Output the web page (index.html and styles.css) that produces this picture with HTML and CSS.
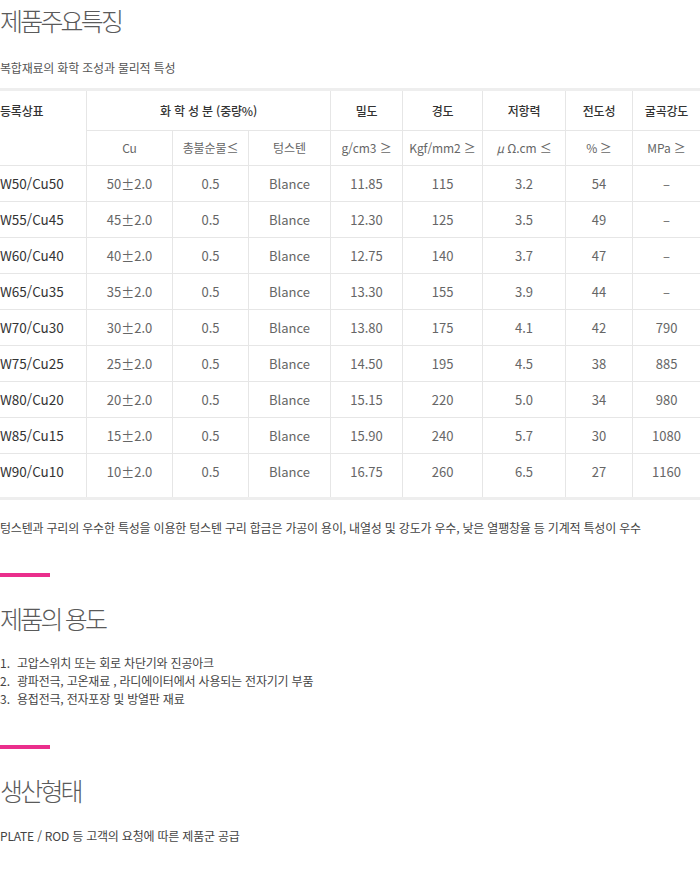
FILE: index.html
```html
<!DOCTYPE html>
<html lang="ko">
<head>
<meta charset="utf-8">
<title>제품주요특징</title>
<link rel="stylesheet" href="styles.css">
</head>
<body>
<div class="page">
  <h2 class="title">제품주요특징</h2>
  <p class="sub">복합재료의 화학 조성과 물리적 특성</p>

  <table class="spec">
    <colgroup>
      <col class="c1"><col class="c2"><col class="c3"><col class="c4"><col class="c5"><col class="c6"><col class="c7"><col class="c8"><col class="c9">
    </colgroup>
    <thead>
      <tr class="h1">
        <th rowspan="2" class="first top">등록상표</th>
        <th colspan="3">화 학 성 분 (중량%)</th>
        <th>밀도</th>
        <th>경도</th>
        <th>저항력</th>
        <th>전도성</th>
        <th>굴곡강도</th>
      </tr>
      <tr class="h2">
        <th>Cu</th>
        <th>총불순물≤</th>
        <th>텅스텐</th>
        <th>g/cm3 ≥</th>
        <th>Kgf/mm2 ≥</th>
        <th><i>μ</i> Ω.cm ≤</th>
        <th>% ≥</th>
        <th>MPa ≥</th>
      </tr>
    </thead>
    <tbody>
      <tr><td class="first">W50/Cu50</td><td>50±2.0</td><td>0.5</td><td>Blance</td><td>11.85</td><td>115</td><td>3.2</td><td>54</td><td>–</td></tr>
      <tr><td class="first">W55/Cu45</td><td>45±2.0</td><td>0.5</td><td>Blance</td><td>12.30</td><td>125</td><td>3.5</td><td>49</td><td>–</td></tr>
      <tr><td class="first">W60/Cu40</td><td>40±2.0</td><td>0.5</td><td>Blance</td><td>12.75</td><td>140</td><td>3.7</td><td>47</td><td>–</td></tr>
      <tr><td class="first">W65/Cu35</td><td>35±2.0</td><td>0.5</td><td>Blance</td><td>13.30</td><td>155</td><td>3.9</td><td>44</td><td>–</td></tr>
      <tr><td class="first">W70/Cu30</td><td>30±2.0</td><td>0.5</td><td>Blance</td><td>13.80</td><td>175</td><td>4.1</td><td>42</td><td>790</td></tr>
      <tr><td class="first">W75/Cu25</td><td>25±2.0</td><td>0.5</td><td>Blance</td><td>14.50</td><td>195</td><td>4.5</td><td>38</td><td>885</td></tr>
      <tr><td class="first">W80/Cu20</td><td>20±2.0</td><td>0.5</td><td>Blance</td><td>15.15</td><td>220</td><td>5.0</td><td>34</td><td>980</td></tr>
      <tr><td class="first">W85/Cu15</td><td>15±2.0</td><td>0.5</td><td>Blance</td><td>15.90</td><td>240</td><td>5.7</td><td>30</td><td>1080</td></tr>
      <tr class="last"><td class="first">W90/Cu10</td><td>10±2.0</td><td>0.5</td><td>Blance</td><td>16.75</td><td>260</td><td>6.5</td><td>27</td><td>1160</td></tr>
    </tbody>
  </table>

  <p class="desc">텅스텐과 구리의 우수한 특성을 이용한 텅스텐 구리 합금은 가공이 용이, 내열성 및 강도가 우수, 낮은 열팽창율 등 기계적 특성이 우수</p>

  <div class="bar"></div>
  <h2 class="title t2">제품의 용도</h2>
  <ol class="uses">
    <li><span class="num">1.</span>고압스위치 또는 회로 차단기와 진공아크</li>
    <li><span class="num">2.</span>광파전극, 고온재료 , 라디에이터에서 사용되는 전자기기 부품</li>
    <li><span class="num">3.</span>용접전극, 전자포장 및 방열판 재료</li>
  </ol>

  <div class="bar bar2"></div>
  <h2 class="title t3">생산형태</h2>
  <p class="desc last-p">PLATE / ROD 등 고객의 요청에 따른 제품군 공급</p>
</div>
</body>
</html>
```

FILE: styles.css
```css
html, body {
  margin: 0;
  padding: 0;
  background: #fff;
}

body {
  font-family: "Noto Sans CJK KR", "Noto Sans", sans-serif;
  color: #555;
}

.page {
  width: 700px;
}

.title {
  margin: 0;
  font-size: 25px;
  line-height: 40px;
  font-weight: 300;
  letter-spacing: -2.8px;
  color: #5a5a5a;
}

.sub {
  margin: 18px 0 0;
  font-size: 12px;
  line-height: 20px;
  letter-spacing: -0.2px;
  color: #555;
}

.spec {
  margin-top: 10px;
  width: 700px;
  table-layout: fixed;
  border-collapse: separate;
  border-spacing: 0;
  border-top: 3px solid #eeeeee;
  border-bottom: 3px solid #eeeeee;
}

.c1 { width: 86px; }
.c2 { width: 86px; }
.c3 { width: 76px; }
.c4 { width: 82px; }
.c5 { width: 72px; }
.c6 { width: 80px; }
.c7 { width: 83px; }
.c8 { width: 67px; }
.c9 { width: 68px; }

.spec th,
.spec td {
  padding: 0;
  text-align: center;
  vertical-align: middle;
  border-bottom: 1px solid #e6e6e6;
  border-left: 1px solid #e6e6e6;
  white-space: nowrap;
}

.spec th {
  font-size: 12px;
  font-weight: 500;
  letter-spacing: -0.2px;
  color: #333;
}

.spec .h1 th {
  height: 39px;
  line-height: 39px;
}

.spec .h2 th {
  height: 34px;
  line-height: 34px;
  font-weight: 400;
  color: #666;
  letter-spacing: -0.1px;
}

.spec .h2 th i {
  font-style: italic;
}

.spec th.top {
  vertical-align: top;
}

.spec td {
  height: 35px;
  line-height: 35px;
  font-size: 13px;
  color: #666;
}

.spec .first {
  border-left: 0;
  text-align: left;
  color: #333;
}

.spec td.first {
  font-size: 13.5px;
}

.spec tr.last td {
  border-bottom: 0;
  height: 43px;
  line-height: 35px;
  vertical-align: top;
}

.desc {
  margin: 18px 0 0;
  font-size: 12px;
  line-height: 20px;
  letter-spacing: -0.2px;
  color: #444;
}

.bar {
  margin-top: 35px;
  width: 50px;
  height: 4px;
  background: #ea2e8c;
}

.bar2 {
  margin-top: 37px;
}

.t2,
.t3 {
  margin-top: 21px;
}

.uses {
  margin: 16px 0 0;
  padding: 0;
  list-style: none;
  font-size: 12px;
  line-height: 18px;
  letter-spacing: -0.2px;
  color: #444;
}

.uses .num {
  display: inline-block;
  width: 17px;
  letter-spacing: 0;
}

.last-p {
  margin-top: 16px;
}
```
